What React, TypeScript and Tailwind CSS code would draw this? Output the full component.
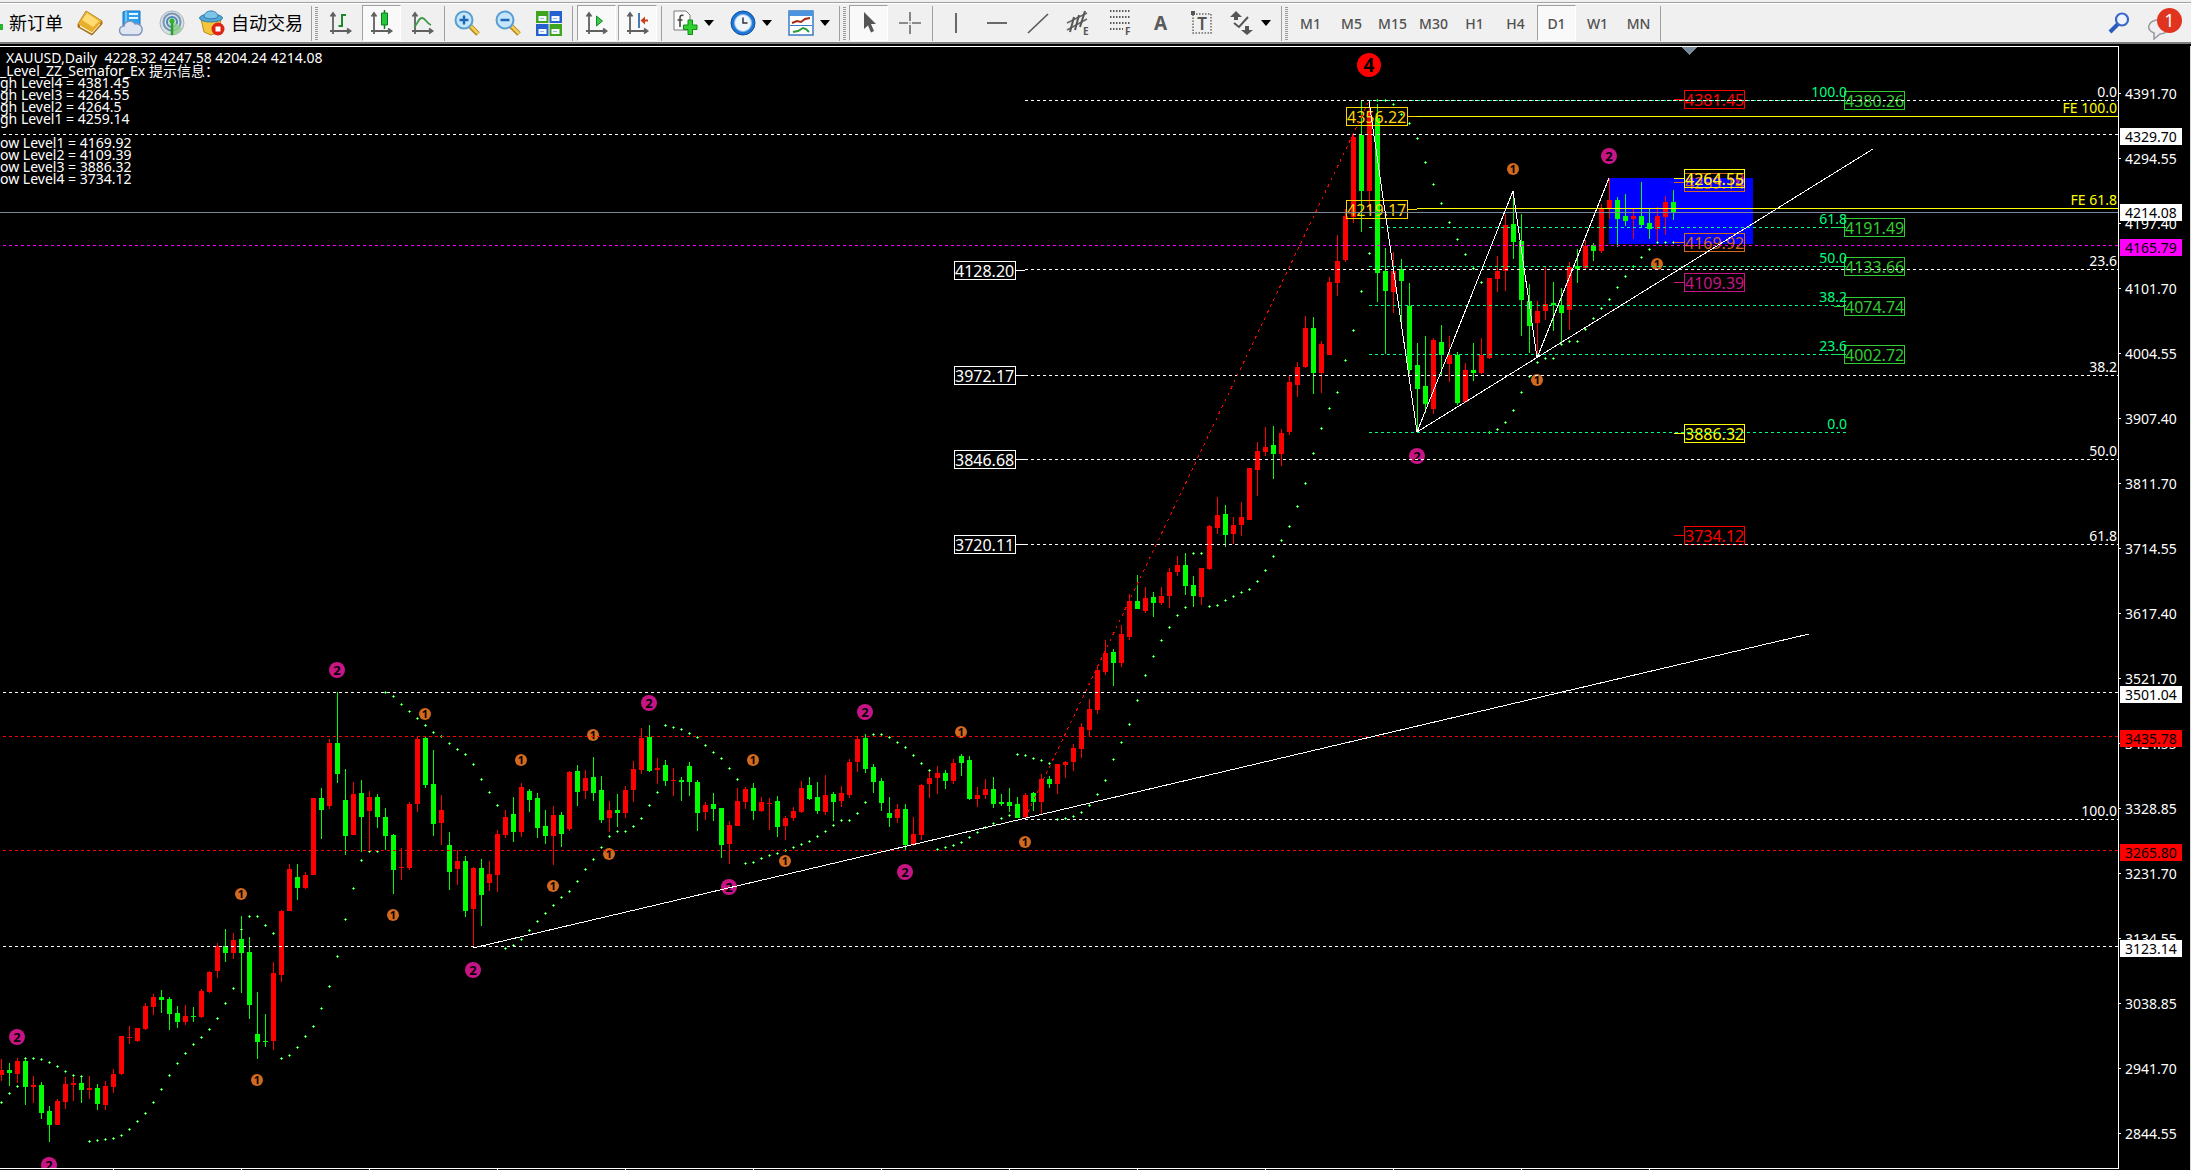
import React from 'react';
import clsx from 'clsx';

const FONT = "font-['Noto_Sans','Noto_Sans_CJK_SC',sans-serif]";

// ---------------------------------------------------------------- toolbar

interface ToolButtonProps {
  label: string;
  pressed?: boolean;
  menu?: boolean;
  children: React.ReactNode;
}

const ToolButton: React.FC<ToolButtonProps> = ({ label, pressed, menu, children }) => (
  <button
    type="button"
    aria-label={label}
    aria-pressed={pressed}
    className={clsx(
      'h-[36px] shrink-0 flex items-center',
      menu ? 'w-14 pl-1.5 gap-1.5' : 'w-[39px] justify-center',
      pressed && 'bg-[#f9f9f9] border border-white border-t-[#a0a0a0] border-l-[#a0a0a0]'
    )}
  >
    {children}
    {menu && (
      <svg width="10" height="6" viewBox="0 0 10 6">
        <path d="M0 0h10L5 6z" fill="#000" />
      </svg>
    )}
  </button>
);

const Separator = ({ className = 'mx-1' }: { className?: string }) => (
  <div className={clsx('w-px h-[35px] shrink-0 bg-[#a0a0a0]', className)} />
);

const Grip = ({ className = 'mr-[3px]' }: { className?: string }) => (
  <svg width="3" height="34" className={clsx('shrink-0', className)} shapeRendering="crispEdges">
    <line x1="1.5" y1="1" x2="1.5" y2="34" stroke="#9a9a9a" strokeWidth="3" strokeDasharray="1 1" />
  </svg>
);

const Icon = ({ children }: { children: React.ReactNode }) => (
  <svg width="26" height="26" viewBox="0 0 26 26" fill="none" className="shrink-0">
    {children}
  </svg>
);

const BookIcon = () => (
  <Icon>
    <path d="M9 1L1 14v3l14 8 10-11v-3z" fill="#b97b16" stroke="#8f5d10" strokeWidth=".8" />
    <path d="M3 15l12 7 8-9v1.500l-8 9L3 17z" fill="#fff3c4" />
    <path d="M9 1l16 10-10 11L1 14z" fill="#e8ae2c" />
    <path d="M10 3l12 8-6 6L5 10z" fill="#ffdc74" />
  </Icon>
);

const CloudPcIcon = () => (
  <Icon>
    <path d="M5 2l3-1h14v16H5z" fill="#2aa0ee" stroke="#1673c4" />
    <path d="M8 1v16" stroke="#bfe5ff" />
    <path d="M11 4h9M11 8h9" stroke="#e8f7ff" strokeWidth="2" />
    <path d="M6 25a4.500 4.500 0 010-9 6 6 0 0111-2 5.500 5.500 0 013 11z" fill="#dfe6f2" stroke="#7d93ba" strokeWidth="1.400" />
  </Icon>
);

const SignalIcon = () => (
  <Icon>
    <circle cx="13" cy="13" r="12" fill="#d8e0e4" stroke="#a7b4bc" />
    <circle cx="13" cy="12" r="8.500" stroke="#7796b4" strokeWidth="2" />
    <circle cx="13" cy="12" r="5" stroke="#4f84b8" strokeWidth="2" />
    <path d="M13 12v13a12 12 0 0010-7l-5-4z" fill="#8ed08a" opacity=".8" />
    <path d="M13 12v13" stroke="#2aa02a" strokeWidth="2.500" />
    <circle cx="13" cy="11" r="2.600" fill="#2bb32b" />
  </Icon>
);

const RobotIcon = () => (
  <Icon>
    <path d="M2 9h20l-2 13-8 3-7-3z" fill="#f4c63c" stroke="#bd8a17" />
    <ellipse cx="12" cy="8" rx="11.500" ry="4" fill="#56a7d4" stroke="#2f7cab" />
    <path d="M5 7c0-8 14-8 14 0-3 2.500-11 2.500-14 0z" fill="#7cc4ea" stroke="#2f7cab" />
    <circle cx="19" cy="19" r="6.500" fill="#dc2516" />
    <path d="M16.500 16.500h5v5h-5z" fill="#fff" />
  </Icon>
);

const AXES = 'M5 3v21M2 21h20M2.500 6.500L5 3l2.500 3.500M19 18.500l3.500 2.500-3.500 2.500';

const BarChartIcon = () => (
  <Icon>
    <path d={AXES} stroke="#606060" strokeWidth="1.800" />
    <path d="M14 4v13M14 5h4M10.500 16H14" stroke="#1c8a2c" strokeWidth="2" />
  </Icon>
);

const CandleIcon = () => (
  <Icon>
    <path d={AXES} stroke="#606060" strokeWidth="1.800" />
    <path d="M15.500 0v19" stroke="#0e7a1c" strokeWidth="1.500" />
    <path d="M12.500 3h6v12h-6z" fill="#22c93a" stroke="#0e7a1c" />
  </Icon>
);

const LineChartIcon = () => (
  <Icon>
    <path d={AXES} stroke="#606060" strokeWidth="1.800" />
    <path d="M4 17c3-1 4-9 8-9 3.500 0 4 5 9 7" stroke="#3c9a4a" strokeWidth="1.800" />
  </Icon>
);

const ZoomIcon = ({ plus }: { plus?: boolean }) => (
  <Icon>
    <path d="M15 15l9 9" stroke="#b4871b" strokeWidth="5" />
    <path d="M16 15.500l8 8" stroke="#f3cf55" strokeWidth="2.500" />
    <circle cx="10" cy="10" r="8.500" fill="#c6e6fb" stroke="#5a9ed2" strokeWidth="2" />
    <path d={plus ? 'M5.500 10h9M10 5.500v9' : 'M5.500 10h9'} stroke="#1c6ab4" strokeWidth="2.500" />
  </Icon>
);

const TileIcon = () => (
  <Icon>
    <path d="M0 1h12.500v12H0zM13.500 14H26v12H13.500z" fill="#3fa51f" />
    <path d="M13.500 1H26v12H13.500zM0 14h12.500v12H0z" fill="#2560cf" />
    <path d="M2.500 6h8v5h-8zM15.500 6h8v5h-8zM2.500 19h8v5h-8zM15.500 19h8v5h-8z" fill="#f4f8ff" />
    <path d="M4 8.500h4M17 8.500h4M4 21.500h4M17 21.500h4" stroke="#9fb6d8" />
  </Icon>
);

const AutoScrollIcon = () => (
  <Icon>
    <path d={AXES} stroke="#606060" strokeWidth="1.800" />
    <path d="M12.500 6l6 5-6 5z" fill="#3ecb4d" stroke="#178a26" />
  </Icon>
);

const ShiftIcon = () => (
  <Icon>
    <path d={AXES} stroke="#606060" strokeWidth="1.800" />
    <path d="M14 3v15" stroke="#2f6ca8" strokeWidth="1.800" />
    <path d="M17 10.500h6" stroke="#c8401c" strokeWidth="2" />
    <path d="M15.500 10.500L20 6.500v8z" fill="#c8401c" />
  </Icon>
);

const IndicatorIcon = () => (
  <Icon>
    <path d="M2 1h12l4 4v15H2z" fill="#fbfbfb" stroke="#7b7b7b" />
    <path d="M11.500 5.500c-3-1-3.500.500-3.500 3V17M5.500 10h5" stroke="#444" strokeWidth="1.600" />
    <path d="M16 10h4.500v5H25v4.500h-4.500v5H16v-5h-4.500V15H16z" fill="#2fd02f" stroke="#108a14" />
  </Icon>
);

const ClockIcon = () => (
  <Icon>
    <circle cx="13" cy="13" r="12" fill="#1f78d8" stroke="#0f4f9c" />
    <circle cx="13" cy="13" r="8.500" fill="#eef6fd" stroke="#8fbce6" />
    <path d="M13 7.500V13h4.500" stroke="#333" strokeWidth="1.500" />
  </Icon>
);

const TemplateIcon = () => (
  <Icon>
    <path d="M1 1h24v24H1z" fill="#fff" stroke="#3a7cc4" strokeWidth="1.500" />
    <path d="M1 1h24v5H1z" fill="#4a94e0" />
    <path d="M2 15.500h22" stroke="#3a7cc4" />
    <path d="M4 13l5-2 4 1 4-3 5-1" stroke="#a32a10" strokeWidth="2" />
    <path d="M5 22l5-1 5-3 3 1 3 3" stroke="#2b9c34" strokeWidth="2" />
  </Icon>
);

const CursorIcon = () => (
  <Icon>
    <path d="M8 2v17l4-3.500 3 7 3-1.500-3-7h5z" fill="#555" />
  </Icon>
);

const CrosshairIcon = () => (
  <Icon>
    <path d="M13 2v9M13 15v9M2 13h9M15 13h9M12.500 13h1" stroke="#6a6a6a" strokeWidth="1.600" />
  </Icon>
);

const VLineIcon = () => (
  <Icon>
    <path d="M13 3v20" stroke="#5a5a5a" strokeWidth="1.800" />
  </Icon>
);

const HLineIcon = () => (
  <Icon>
    <path d="M3 13h20" stroke="#5a5a5a" strokeWidth="1.800" />
  </Icon>
);

const TrendLineIcon = () => (
  <Icon>
    <path d="M3 23L23 4" stroke="#5a5a5a" strokeWidth="1.700" />
  </Icon>
);

const ChannelIcon = () => (
  <Icon>
    <path d="M1 13L21 3M1 20L21 9" stroke="#666" strokeWidth="1.500" />
    <path d="M4 22l4-15M9 20l4-15M14 17l5-16" stroke="#555" strokeWidth="2" />
    <text x="17" y="25" fontSize="10" fontWeight="700" fill="#555">E</text>
  </Icon>
);

const FiboIcon = () => (
  <Icon>
    <path d="M3 1h20M3 7h20M3 13h20M3 19h13" stroke="#5a5a5a" strokeWidth="2" strokeDasharray="1.500 1.500" />
    <text x="18" y="25" fontSize="10" fontWeight="700" fill="#555">F</text>
  </Icon>
);

const LabelIcon = () => (
  <Icon>
    <path d="M4 4h18v19H4z" stroke="#666" strokeWidth="1.500" strokeDasharray="1.500 1.500" />
    <path d="M2 1h4v4H2z" fill="#555" />
    <text x="13" y="20" textAnchor="middle" fontSize="17" fontWeight="600" fill="#555">T</text>
  </Icon>
);

const ArrowsIcon = () => (
  <Icon>
    <path d="M7 1l6 6H9v3H5V7H1zM18 25l-6-5h4v-4h4v4h4z" fill="#555" />
    <path d="M5 13l5 4 9-10" stroke="#555" strokeWidth="2" />
  </Icon>
);

const SearchIcon = () => (
  <svg width="22" height="22" viewBox="0 0 22 22" fill="none">
    <path d="M10 12l-8 8" stroke="#2a5cc0" strokeWidth="4" />
    <circle cx="14" cy="7.500" r="6" fill="#eef4fb" stroke="#3a68c8" strokeWidth="2.200" />
  </svg>
);

const ChatIcon = () => (
  <svg width="24" height="22" viewBox="0 0 24 22" fill="none">
    <path d="M12 2c12 0 12 14 1 14l-6 5v-6C-2 12 1 2 12 2z" fill="#ededf2" stroke="#98989e" strokeWidth="1.500" />
  </svg>
);

const TIMEFRAMES = ['M1', 'M5', 'M15', 'M30', 'H1', 'H4', 'D1', 'W1', 'MN'];

const Toolbar = () => (
  <header className="bg-[#f0f0f0] border-b-2 border-[#7d7d7d]">
    <div className="h-[3px] border-b border-[#a0a0a0]" />
    <div className="h-[39px] border-t border-white flex items-center overflow-hidden">
      <button type="button" className="h-[36px] w-[68px] shrink-0 flex items-center gap-1.5 text-[18px] whitespace-nowrap">
        <svg width="3" height="14" viewBox="0 0 3 14" className="mt-2">
          <path d="M0 4h3v6H0z" fill="#25b52c" />
        </svg>
        新订单
      </button>
      <div className="flex gap-0.5 pl-0.5">
        <ToolButton label="History"><BookIcon /></ToolButton>
        <ToolButton label="Virtual hosting"><CloudPcIcon /></ToolButton>
        <ToolButton label="Signals"><SignalIcon /></ToolButton>
        <button type="button" className="h-[36px] w-[116px] shrink-0 flex items-center gap-1.5 pl-1.5 text-[18px] whitespace-nowrap">
          <RobotIcon />
          自动交易
        </button>
      </div>
      <Separator className="ml-0.5 mr-[3px]" />
      <Grip />
      <div className="flex gap-0.5">
        <ToolButton label="Bar chart"><BarChartIcon /></ToolButton>
        <ToolButton label="Candlesticks" pressed><CandleIcon /></ToolButton>
        <ToolButton label="Line chart"><LineChartIcon /></ToolButton>
      </div>
      <Separator className="mx-0.5" />
      <div className="flex gap-0.5">
        <ToolButton label="Zoom in"><ZoomIcon plus /></ToolButton>
        <ToolButton label="Zoom out"><ZoomIcon /></ToolButton>
        <ToolButton label="Tile windows"><TileIcon /></ToolButton>
      </div>
      <Separator />
      <div className="flex gap-0.5">
        <ToolButton label="Auto scroll" pressed><AutoScrollIcon /></ToolButton>
        <ToolButton label="Chart shift" pressed><ShiftIcon /></ToolButton>
      </div>
      <Separator />
      <div className="flex gap-0.5">
        <ToolButton label="Indicators" menu><IndicatorIcon /></ToolButton>
        <ToolButton label="Periods" menu><ClockIcon /></ToolButton>
        <ToolButton label="Templates" menu><TemplateIcon /></ToolButton>
      </div>
      <Separator className="ml-px mr-[3px]" />
      <Grip />
      <div className="flex gap-0.5">
        <ToolButton label="Cursor" pressed><CursorIcon /></ToolButton>
        <ToolButton label="Crosshair"><CrosshairIcon /></ToolButton>
      </div>
      <Separator className="mx-[3px]" />
      <div className="flex gap-0.5">
        <ToolButton label="Vertical line"><VLineIcon /></ToolButton>
        <ToolButton label="Horizontal line"><HLineIcon /></ToolButton>
        <ToolButton label="Trendline"><TrendLineIcon /></ToolButton>
        <ToolButton label="Equidistant channel"><ChannelIcon /></ToolButton>
        <ToolButton label="Fibonacci retracement"><FiboIcon /></ToolButton>
        <ToolButton label="Text"><span className="text-[19px] font-bold text-[#5a5a5a]">A</span></ToolButton>
        <ToolButton label="Text label"><LabelIcon /></ToolButton>
        <ToolButton label="Arrows" menu><ArrowsIcon /></ToolButton>
      </div>
      <Separator className="ml-0.5 mr-[3px]" />
      <Grip />
      <div className="flex gap-0.5 text-[14px] font-medium text-[#505050]">
        {TIMEFRAMES.map((tf) => (
          <ToolButton key={tf} label={tf} pressed={tf === 'D1'}>
            {tf}
          </ToolButton>
        ))}
      </div>
      <Separator className="mx-0.5" />
      <div className="ml-auto pr-[9px] flex items-center gap-[17px]">
        <button type="button" aria-label="Search"><SearchIcon /></button>
        <button type="button" aria-label="Messages" className="relative w-[35px] h-[34px] flex items-end">
          <ChatIcon />
          <span className="absolute right-0 top-0.5 w-[25px] h-[25px] rounded-full bg-[#e03420] text-white text-[18px] leading-[25px] text-center">
            1
          </span>
        </button>
      </div>
    </div>
  </header>
);

// ---------------------------------------------------------------- chart data

const STEP = 8;
const PLOT_TOP = 47;
const PLOT_HEIGHT = 1121;
const barX = (index: number) => 1 + index * STEP;

const RED = '#ff0000';
const LIME = '#00ff00';
const GOLD = '#ffd700';
const YELLOW = '#ffff00';
const ORANGE = '#d2691e';
const VIOLET = '#c71585';
const SPRING = '#00ff7f';
const GREEN = '#32cd32';

// up, high, body top, body bottom, low
type Candle = [number, number, number, number, number];

const CANDLES: Candle[] = [
  [1, 1059, 1070, 1075, 1081], [0, 1063, 1070, 1073, 1086], [1, 1058, 1061, 1074, 1083], [0, 1060, 1061, 1087, 1105],
  [1, 1076, 1085, 1087, 1103], [0, 1082, 1085, 1113, 1119], [0, 1106, 1111, 1125, 1142], [1, 1099, 1101, 1125, 1125],
  [1, 1077, 1084, 1102, 1109], [1, 1077, 1083, 1085, 1101], [0, 1075, 1083, 1090, 1103], [1, 1076, 1088, 1090, 1099],
  [0, 1084, 1088, 1104, 1110], [1, 1081, 1086, 1105, 1110], [1, 1069, 1074, 1087, 1093], [1, 1036, 1036, 1074, 1075],
  [1, 1026, 1037, 1038, 1044], [1, 1028, 1028, 1041, 1042], [1, 1003, 1006, 1029, 1030], [1, 994, 997, 1007, 1015],
  [0, 990, 997, 1000, 1013], [0, 997, 999, 1014, 1030], [0, 1006, 1013, 1022, 1028], [1, 1005, 1016, 1022, 1025],
  [0, 1007, 1016, 1017, 1022], [1, 989, 991, 1017, 1018], [1, 971, 972, 992, 993], [1, 943, 946, 971, 978],
  [0, 929, 946, 953, 962], [1, 933, 940, 953, 959], [0, 916, 939, 953, 993], [0, 937, 952, 1005, 1019],
  [0, 992, 1034, 1042, 1059], [0, 1014, 1041, 1042, 1047], [1, 962, 973, 1041, 1050], [1, 910, 911, 975, 982],
  [1, 864, 869, 911, 911], [0, 864, 877, 888, 900], [1, 872, 875, 888, 889], [1, 798, 798, 875, 875],
  [0, 788, 798, 810, 839], [1, 739, 743, 806, 809], [0, 692, 743, 774, 783], [0, 769, 800, 836, 855],
  [1, 782, 794, 835, 835], [0, 780, 793, 817, 852], [1, 791, 797, 811, 851], [0, 794, 797, 817, 828],
  [0, 808, 817, 836, 850], [0, 834, 835, 870, 894], [1, 848, 867, 868, 880], [1, 802, 804, 868, 870],
  [1, 736, 739, 804, 812], [0, 737, 738, 785, 788], [0, 750, 784, 824, 836], [1, 795, 810, 823, 845],
  [0, 832, 845, 872, 890], [1, 850, 861, 869, 885], [0, 856, 861, 911, 917], [1, 867, 868, 909, 947],
  [0, 859, 868, 895, 926], [1, 861, 874, 883, 891], [1, 830, 834, 875, 892], [1, 810, 817, 835, 838],
  [0, 797, 814, 832, 842], [1, 783, 787, 832, 837], [0, 789, 791, 800, 812], [0, 793, 798, 828, 838],
  [0, 810, 826, 836, 844], [1, 806, 815, 836, 865], [0, 812, 815, 834, 847], [1, 771, 772, 829, 831],
  [0, 765, 771, 792, 806], [1, 770, 778, 791, 799], [0, 757, 777, 793, 801], [0, 776, 790, 820, 823],
  [1, 801, 810, 818, 832], [0, 794, 810, 813, 827], [1, 786, 790, 813, 818], [1, 761, 769, 790, 802],
  [1, 728, 738, 770, 774], [0, 725, 737, 771, 772], [1, 758, 768, 770, 784], [0, 760, 765, 781, 786],
  [1, 768, 780, 781, 796], [0, 777, 780, 782, 801], [0, 762, 766, 782, 796], [0, 780, 782, 813, 831],
  [1, 802, 805, 812, 820], [0, 793, 804, 809, 821], [0, 808, 808, 845, 858], [1, 821, 825, 844, 864],
  [1, 788, 801, 826, 826], [1, 787, 789, 802, 809], [0, 783, 788, 811, 820], [1, 797, 802, 811, 812],
  [1, 798, 803, 804, 830], [0, 796, 801, 827, 837], [1, 816, 818, 826, 840], [1, 807, 811, 818, 821],
  [1, 781, 788, 812, 813], [0, 777, 785, 799, 800], [0, 782, 797, 811, 814], [1, 775, 795, 812, 815],
  [0, 792, 794, 802, 821], [1, 786, 793, 801, 807], [1, 759, 762, 795, 798], [1, 736, 739, 762, 772],
  [0, 734, 738, 769, 773], [0, 764, 767, 782, 793], [0, 778, 781, 803, 811], [0, 797, 813, 818, 827],
  [1, 804, 809, 818, 823], [0, 804, 809, 845, 850], [1, 817, 834, 844, 846], [1, 784, 785, 835, 840],
  [1, 770, 778, 784, 798], [1, 766, 773, 778, 794], [0, 770, 773, 781, 789], [1, 759, 763, 781, 784],
  [0, 754, 756, 763, 776], [0, 756, 760, 799, 800], [1, 787, 795, 799, 807], [1, 779, 789, 795, 799],
  [0, 777, 789, 804, 808], [0, 794, 802, 804, 806], [0, 788, 802, 806, 812], [0, 797, 804, 818, 818],
  [1, 793, 795, 817, 819], [0, 792, 793, 802, 811], [1, 774, 779, 802, 814], [0, 776, 779, 784, 788],
  [1, 764, 764, 784, 794], [1, 761, 762, 765, 778], [1, 744, 748, 762, 771], [1, 723, 727, 749, 758],
  [1, 699, 709, 730, 737], [1, 665, 670, 710, 714], [1, 640, 653, 672, 675], [0, 649, 652, 663, 686],
  [1, 625, 634, 663, 667], [1, 594, 601, 637, 640], [0, 575, 601, 609, 609], [1, 587, 598, 611, 613],
  [0, 592, 597, 603, 617], [1, 587, 596, 603, 605], [1, 568, 572, 596, 608], [1, 556, 565, 572, 576],
  [0, 553, 565, 586, 595], [0, 576, 585, 596, 607], [1, 568, 568, 597, 605], [1, 525, 526, 569, 570],
  [1, 497, 515, 528, 534], [0, 505, 514, 535, 547], [1, 517, 525, 534, 544], [1, 502, 517, 525, 536],
  [1, 468, 468, 520, 520], [1, 442, 451, 470, 496], [1, 427, 447, 452, 456], [0, 426, 445, 454, 479],
  [1, 429, 433, 454, 466], [1, 375, 382, 432, 435], [1, 362, 367, 385, 397], [1, 316, 328, 367, 368],
  [0, 317, 328, 373, 394], [1, 341, 344, 373, 393], [1, 277, 282, 355, 355], [1, 235, 261, 283, 296],
  [1, 209, 216, 260, 262], [1, 133, 137, 217, 223], [0, 101, 135, 191, 232], [1, 101, 112, 191, 210],
  [0, 104, 118, 273, 302], [0, 248, 271, 291, 354], [1, 252, 271, 292, 313], [0, 259, 269, 281, 327],
  [0, 283, 306, 370, 374], [0, 343, 365, 389, 432], [0, 336, 386, 404, 413], [1, 338, 340, 409, 414],
  [0, 325, 342, 355, 375], [1, 336, 355, 364, 382], [0, 352, 355, 403, 405], [1, 363, 370, 402, 403],
  [0, 343, 370, 373, 381], [1, 338, 355, 373, 374], [1, 278, 278, 358, 359], [1, 256, 271, 279, 292],
  [1, 214, 225, 271, 291], [0, 193, 224, 242, 259], [0, 214, 241, 300, 336], [0, 284, 301, 326, 353],
  [1, 301, 311, 323, 357], [1, 267, 304, 311, 320], [0, 282, 303, 305, 331], [0, 288, 305, 313, 344],
  [1, 262, 267, 310, 330], [0, 249, 266, 269, 283], [1, 240, 246, 268, 269], [0, 243, 245, 251, 261],
  [1, 204, 209, 251, 253], [1, 178, 200, 208, 219], [0, 197, 200, 219, 247], [0, 194, 216, 221, 226],
  [1, 209, 216, 219, 239], [0, 182, 216, 225, 227], [0, 209, 223, 229, 239], [1, 207, 216, 229, 242],
  [1, 196, 202, 217, 235], [0, 190, 202, 213, 220],
];

// each run is the first bar index and one y per following bar
const SAR_RUNS: { start: number; ys: number[] }[] = [
  { start: 0, ys: [1102, 1093, 1086, 1058, 1058, 1059, 1062, 1066, 1071, 1075, 1076, 1141, 1140, 1139, 1138, 1135, 1129, 1121, 1113, 1102, 1089, 1075, 1063, 1053, 1044, 1037, 1029, 1018, 1003, 988, 929, 916, 916, 925, 933] },
  { start: 35, ys: [1058, 1055, 1047, 1036, 1026, 1008, 986, 956, 919, 888, 860, 851, 851, 692, 696, 704, 711, 718, 725, 732, 736, 743, 749, 754, 764, 779, 792, 805] },
  { start: 63, ys: [948, 945, 939, 930, 921, 913, 905, 897, 891, 881, 869, 859, 847, 836, 831, 831, 826, 818, 805, 792, 725, 727, 729, 733, 737, 745, 752, 758, 768, 779] },
  { start: 93, ys: [863, 862, 858, 855, 853, 850, 847, 844, 841, 836, 831, 825, 820, 820, 813, 802, 734, 734, 737, 742, 747, 755, 763, 770] },
  { start: 117, ys: [849, 847, 845, 842, 837, 832, 827, 823, 818, 815, 754, 755, 758, 760, 763] },
  { start: 132, ys: [819, 818, 816, 812, 805, 794, 780, 759, 742, 724, 700, 675, 656, 640, 627, 615, 607, 553, 553, 606, 605, 600, 596, 592, 589, 581, 570, 556, 540, 526, 506, 483, 453, 428, 408, 392, 360, 330, 291, 253] },
  { start: 172, ys: [100, 100, 104, 114, 123, 138, 162, 184, 203, 222, 239, 254, 268, 282] },
  { start: 186, ys: [432, 429, 422, 410, 392, 376, 362, 358, 358, 344, 341, 341, 329, 318, 308, 299, 287, 276, 266, 257, 249, 242, 242, 242] },
];

type Marker = [number, number];
const LEVEL1: Marker[] = [
  [241, 894], [257, 1080], [393, 915], [425, 714], [521, 760], [593, 735], [553, 886], [609, 854],
  [753, 760], [785, 861], [961, 732], [1025, 842], [1513, 169], [1537, 380], [1657, 264],
];
const LEVEL2: Marker[] = [
  [17, 1037], [49, 1165], [337, 670], [649, 703], [473, 970], [729, 887], [865, 712], [905, 872],
  [1417, 456], [1609, 156],
];

// y, colour, start x
const DASHED: [number, string, number][] = [
  [100, '#ffffff', 1025], [134, '#ffffff', 3], [245, '#ff00ff', 3], [269, '#ffffff', 1025],
  [375, '#ffffff', 1025], [459, '#ffffff', 1025], [544, '#ffffff', 1025], [692, '#ffffff', 3],
  [736, RED, 3], [819, '#ffffff', 1025], [850, RED, 3], [946, '#ffffff', 3],
];

const FIBO: [number, string][] = [
  [100, '100.0'], [227, '61.8'], [266, '50.0'], [305, '38.2'], [354, '23.6'], [432, '0.0'],
];

const RIGHT_LABELS: [number, string, string][] = [
  [97, '0.0', '#ffffff'], [113, 'FE 100.0', YELLOW], [205, 'FE 61.8', YELLOW], [266, '23.6', '#ffffff'],
  [372, '38.2', '#ffffff'], [456, '50.0', '#ffffff'], [541, '61.8', '#ffffff'], [816, '100.0', '#ffffff'],
];

interface PriceTag {
  x: number;
  y: number;
  price: string;
  color: string;
  side: 'left' | 'right';
}

const TAGS: PriceTag[] = [
  { x: 954, y: 270, price: '4128.20', color: '#ffffff', side: 'right' },
  { x: 954, y: 375, price: '3972.17', color: '#ffffff', side: 'right' },
  { x: 954, y: 459, price: '3846.68', color: '#ffffff', side: 'right' },
  { x: 954, y: 544, price: '3720.11', color: '#ffffff', side: 'right' },
  { x: 1346, y: 116, price: '4356.22', color: GOLD, side: 'right' },
  { x: 1346, y: 209, price: '4219.17', color: GOLD, side: 'right' },
  { x: 1684, y: 99, price: '4381.45', color: RED, side: 'left' },
  { x: 1684, y: 182, price: '4259.14', color: ORANGE, side: 'left' },
  { x: 1684, y: 178, price: '4264.50', color: VIOLET, side: 'left' },
  { x: 1684, y: 178, price: '4264.55', color: YELLOW, side: 'left' },
  { x: 1684, y: 242, price: '4169.92', color: ORANGE, side: 'left' },
  { x: 1684, y: 282, price: '4109.39', color: VIOLET, side: 'left' },
  { x: 1684, y: 433, price: '3886.32', color: YELLOW, side: 'left' },
  { x: 1684, y: 535, price: '3734.12', color: RED, side: 'left' },
  { x: 1844, y: 100, price: '4380.26', color: GREEN, side: 'left' },
  { x: 1844, y: 227, price: '4191.49', color: GREEN, side: 'left' },
  { x: 1844, y: 266, price: '4133.66', color: GREEN, side: 'left' },
  { x: 1844, y: 306, price: '4074.74', color: GREEN, side: 'left' },
  { x: 1844, y: 354, price: '4002.72', color: GREEN, side: 'left' },
];

const AXIS_PRICES = [
  '4391.70', '4294.55', '4197.40', '4101.70', '4004.55', '3907.40', '3811.70', '3714.55', '3617.40',
  '3521.70', '3424.55', '3328.85', '3231.70', '3134.55', '3038.85', '2941.70', '2844.55',
];

const AXIS_BOXES = [
  { top: 128, price: '4329.70', tone: 'bg-white text-black' },
  { top: 204, price: '4214.08', tone: 'bg-white text-black' },
  { top: 239, price: '4165.79', tone: 'bg-[#ff00ff] text-black' },
  { top: 686, price: '3501.04', tone: 'bg-white text-black' },
  { top: 730, price: '3435.78', tone: 'bg-[#ff0000] text-black' },
  { top: 844, price: '3265.80', tone: 'bg-[#ff0000] text-black' },
  { top: 940, price: '3123.14', tone: 'bg-white text-black' },
];

const HIGHS = ['gh Level4 = 4381.45', 'gh Level3 = 4264.55', 'gh Level2 = 4264.5', 'gh Level1 = 4259.14'];
const LOWS = ['ow Level1 = 4169.92', 'ow Level2 = 4109.39', 'ow Level3 = 3886.32', 'ow Level4 = 3734.12'];

// ---------------------------------------------------------------- chart

const CandleBar = ({ candle, index }: { candle: Candle; index: number }) => {
  const [up, high, top, bottom, low] = candle;
  const x = barX(index);
  const color = up ? RED : LIME;
  return (
    <g fill={color}>
      <rect x={x} y={high} width="1" height={Math.max(low - high, 1)} />
      <rect x={x - 2} y={top} width="5" height={Math.max(bottom - top, 1)} />
    </g>
  );
};

const SarDot = ({ x, y }: { x: number; y: number }) => (
  <g>
    <path d={`M${x - 1} ${y}h3v1h-3zM${x} ${y - 1}h1v3h-1z`} fill={LIME} />
    <rect x={x} y={y} width="1" height="1" fill="#ffffff" />
  </g>
);

const MarkerDot = ({ at, r, size, color, text }: { at: Marker; r: number; size: number; color: string; text: string }) => (
  <g>
    <circle cx={at[0]} cy={at[1]} r={r} fill={color} />
    <text x={at[0]} y={at[1] + Math.round(size * 0.36)} textAnchor="middle" fontSize={size} fontWeight="700" fill="#000000">
      {text}
    </text>
  </g>
);

const Tag = ({ tag }: { tag: PriceTag }) => {
  const width = tag.side === 'right' ? 61 : 60;
  const stubX = tag.side === 'right' ? tag.x + width : tag.x - 10;
  return (
    <g>
      <rect x={tag.x + 0.5} y={tag.y - 8.5} width={width} height="18" fill="none" stroke={tag.color} />
      <rect x={stubX} y={tag.y} width="10" height="1" fill={tag.color} />
      <text x={tag.x + 1} y={tag.y + 7} fontSize="16" fill={tag.color}>{tag.price}</text>
    </g>
  );
};

const Plot = () => (
  <svg className="block w-full" height={PLOT_HEIGHT} shapeRendering="crispEdges" role="img" aria-label="XAUUSD Daily">
    <g transform={`translate(0 ${-PLOT_TOP})`}>
      <rect x="1609" y="178" width="144" height="66" fill="#0000ff" />

      {CANDLES.map((candle, i) => <CandleBar key={i} candle={candle} index={i} />)}
      {SAR_RUNS.map((run) => run.ys.map((y, i) => <SarDot key={run.start + i} x={barX(run.start + i)} y={y} />))}

      <g shapeRendering="auto">
        {LEVEL1.map((at) => <MarkerDot key={at.join()} at={at} r={6} size={11} color={ORANGE} text="1" />)}
        {LEVEL2.map((at) => <MarkerDot key={at.join()} at={at} r={8} size={13} color={VIOLET} text="2" />)}
        <MarkerDot at={[1369, 65]} r={12} size={19} color={RED} text="4" />
      </g>

      {TAGS.map((tag) => <Tag key={tag.price} tag={tag} />)}

      {/* current bid */}
      <line x1="0" y1="212.5" x2="100%" y2="212.5" stroke="#778899" />

      {/* horizontal levels */}
      {FIBO.map(([y, label]) => (
        <g key={label}>
          <line x1="1369" y1={y + 0.5} x2="1847" y2={y + 0.5} stroke={SPRING} strokeDasharray="3 3" />
          <text x="1847" y={y - 3} textAnchor="end" fontSize="14" fill={SPRING}>{label}</text>
        </g>
      ))}
      {DASHED.map(([y, color, x]) => (
        <line key={y} x1={x} y1={y + 0.5} x2="100%" y2={y + 0.5} stroke={color} strokeDasharray="3 3" />
      ))}
      <line x1="1417" y1="116.5" x2="100%" y2="116.5" stroke={YELLOW} />
      <line x1="1417" y1="208.5" x2="100%" y2="208.5" stroke={YELLOW} />

      {/* trend lines and zigzag */}
      <g fill="none" stroke="#ffffff">
        <path d="M473 948L1809 634" />
        <path d="M1369 101L1417 432L1513 191L1537 358L1609 178" />
        <path d="M1417 432L1873 149" />
        <path d="M1025 818L1369 101" stroke={RED} strokeDasharray="3 4" />
      </g>

      {RIGHT_LABELS.map(([y, label, color]) => (
        <svg key={y} x="-1" width="100%" overflow="visible">
          <text x="100%" y={y} textAnchor="end" fontSize="14" fill={color}>{label}</text>
        </svg>
      ))}

      <path d="M1681 47h16l-8 8z" fill="#778899" />
    </g>
  </svg>
);

const Comments = () => (
  <div className="absolute left-0 top-[5px] text-[14px] leading-3 whitespace-pre text-white">
    <p className="pl-1.5 pb-px">XAUUSD,Daily  4228.32 4247.58 4204.24 4214.08</p>
    <p className="h-3">_Level_ZZ_Semafor_Ex 提示信息：</p>
    {HIGHS.map((line) => <p key={line}>{line}</p>)}
    <div className="pt-3">
      {LOWS.map((line) => <p key={line}>{line}</p>)}
    </div>
  </div>
);

const PriceAxis = () => (
  <aside className="relative w-[72px] shrink-0 pt-[15px] border-r border-[#d8d8d8] text-[14px] text-white">
    <ul>
      {AXIS_PRICES.map((price) => (
        <li key={price} className="h-[65px] flex items-center gap-1">
          <span className="w-0.5 h-px bg-white" />
          {price}
        </li>
      ))}
    </ul>
    {AXIS_BOXES.map((box) => (
      <div
        key={box.price}
        className={clsx('absolute left-px w-[62px] h-[17px] pl-[5px] leading-[17px]', box.tone)}
        style={{ top: box.top - PLOT_TOP + 1 }}
      >
        {box.price}
      </div>
    ))}
  </aside>
);

const App = () => (
  <div className={clsx(FONT, 'min-h-screen flex flex-col bg-black overflow-hidden')}>
    <Toolbar />
    <main className="pt-0.5 flex">
      <div className="flex-1 min-w-0">
        <div className="relative border border-l-0 border-white">
          <Plot />
          <Comments />
        </div>
        <svg className="block w-full" height="1" shapeRendering="crispEdges">
          {Array.from({ length: 13 }, (_, i) => (
            <rect key={i} x={113 + i * 128} y="0" width="1" height="1" fill="#ffffff" />
          ))}
        </svg>
      </div>
      <PriceAxis />
    </main>
  </div>
);

export default App;
